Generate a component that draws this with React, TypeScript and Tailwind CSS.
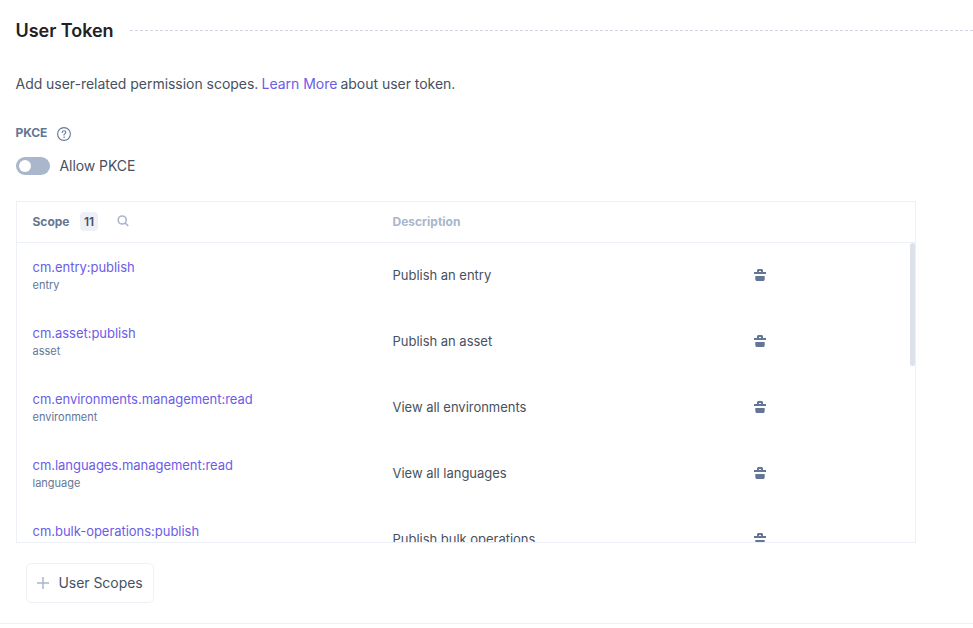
type Scope = { name: string; module: string; description: string };

const scopes: Scope[] = [
  { name: "cm.entry:publish", module: "entry", description: "Publish an entry" },
  { name: "cm.asset:publish", module: "asset", description: "Publish an asset" },
  { name: "cm.environments.management:read", module: "environment", description: "View all environments" },
  { name: "cm.languages.management:read", module: "language", description: "View all languages" },
  { name: "cm.bulk-operations:publish", module: "bulk-operations", description: "Publish bulk operations" },
];

function TrashIcon() {
  return (
    <svg width="12" height="12" viewBox="0 0 12 12" fill="#647696">
      <path fillRule="evenodd" d="M0 3h3V1.5C3 .7 3.7 0 4.5 0h3C8.3 0 9 .7 9 1.5V3h3v2H0V3Zm5-1v1h2V2H5Z" />
      <path d="M1.3 7h9.4v3.2c0 1-.8 1.8-1.8 1.8H3.1c-1 0-1.8-.8-1.8-1.8V7Z" />
    </svg>
  );
}

function HelpIcon() {
  return (
    <svg width="14" height="14" viewBox="0 0 14 14" fill="none" stroke="#647696" strokeLinecap="round">
      <circle cx="7" cy="7" r="6.4" strokeWidth="1.1" />
      <path d="M5.2 5.4C5.2 4.4 6 3.7 7 3.7s1.8.7 1.8 1.6c0 1.3-1.8 1.4-1.8 2.8" strokeWidth="1.1" />
      <circle cx="7" cy="10.2" r=".35" strokeWidth=".7" />
    </svg>
  );
}

function SearchIcon() {
  return (
    <svg width="12" height="12" viewBox="0 0 12 12" fill="none" stroke="#a9b6cb" strokeWidth="1.6">
      <circle cx="5.2" cy="5" r="4" />
      <path d="m8 7.8 3.2 3" />
    </svg>
  );
}

function ScopeRow({ name, module, description }: Scope) {
  return (
    <div className="flex h-[66px] items-center pl-[15.5px]">
      <div className="w-[360px]">
        <div className="text-[13px] leading-[18px] tracking-[-0.03px] text-[#6c5ce7]">{name}</div>
        <div className="text-[11px] leading-[18px] text-[#647696]">{module}</div>
      </div>
      <div className="w-[361.5px] pb-[2px] text-[13px] leading-5 tracking-[-0.02px] text-[#475161]">{description}</div>
      <div className="pb-[2px]"><TrashIcon /></div>
    </div>
  );
}

export default function App() {
  return (
    <main className="h-[628px] overflow-hidden bg-white font-['Inter',sans-serif] text-[#475161]">
      <section className="h-[624px] border-b border-[#edeff7] pt-[18px]">
        <div className="flex h-6 items-center pl-[15.5px]">
          <h2 className="w-[114.5px] pt-[2px] text-[18px] leading-6 font-semibold tracking-[-0.03px] text-[#222222]">User Token</h2>
          <div className="h-px flex-1 bg-[repeating-linear-gradient(90deg,#d0d5e0_0_3px,transparent_3px_5px)]" />
        </div>
        <p className="mt-[31px] pl-[15.5px] text-[14px] leading-[22px] tracking-[-0.03px]">
          Add user-related permission scopes. <a className="-mx-[0.7px] text-[#6c5ce7]">Learn More</a> about user token.
        </p>
        <div className="mt-[28px] flex h-5 items-center gap-[10px] pl-[15.5px]">
          <span className="text-[12px] font-bold tracking-[-0.1px] text-[#647696]">PKCE</span>
          <span className="pt-[2px]"><HelpIcon /></span>
        </div>
        <label className="mt-[12px] flex h-[22px] items-center gap-[9.5px] pl-4">
          <span className="flex h-[18px] w-[34px] items-center rounded-full bg-[#a9b6cb] pl-[3px]">
            <span className="size-3 rounded-full bg-white" />
          </span>
          <span className="pb-[2px] text-[14px] tracking-[-0.06px]">Allow PKCE</span>
        </label>

        <div className="mt-[24px] ml-4 h-[342px] w-[900px] border border-[#edf1f7]">
          <div className="flex h-[41px] items-center border-b border-[#edf1f7] pl-[15.5px] text-[12px] font-bold">
            <div className="flex w-[360px] items-center text-[#647696]">
              <span className="w-[37.5px]">Scope</span>
              <span className="mb-px ml-[10px] flex h-[19px] w-[18px] items-center justify-center rounded-[4px] bg-[#edf1f7] text-[12px] font-semibold text-[#475161]">11</span>
              <span className="ml-[19.3px] pb-[2px]"><SearchIcon /></span>
            </div>
            <span className="text-[#a9b6cb]">Description</span>
          </div>
          <div className="flex h-[299px] overflow-hidden">
            <div className="flex-1">
              {scopes.map((scope) => <ScopeRow key={scope.name} {...scope} />)}
            </div>
            <div className="h-[123px] w-[5px] rounded-full bg-[#dde1ea]" />
          </div>
        </div>

        <button className="mt-5 ml-[26px] flex h-10 w-32 items-center rounded-[5px] border border-[#edf1f7] pl-[10px]">
          <svg width="12" height="12" viewBox="0 0 12 12" stroke="#a9b6cb" strokeWidth="1.5"><path d="M6 0v12M0 6h12" /></svg>
          <span className="ml-[9.5px] pb-[2px] text-[14px] tracking-[-0.05px]">User Scopes</span>
        </button>
      </section>
    </main>
  );
}
